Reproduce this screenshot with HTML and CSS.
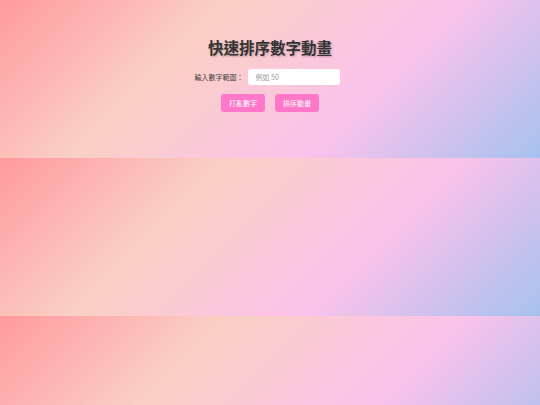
FILE: index.html
```html
<!DOCTYPE html>
<html lang="zh-Hant">
<head>
<meta charset="utf-8">
<title>快速排序數字動畫</title>
<link rel="stylesheet" href="styles.css">
</head>
<body>
<main class="app">
  <h1 class="title">快速排序數字動畫</h1>
  <div class="controls">
    <label class="label" for="range">輸入數字範圍：</label>
    <input class="input" id="range" type="text" placeholder="例如 50">
  </div>
  <div class="actions">
    <button class="btn" type="button">打亂數字</button>
    <button class="btn" type="button">排序動畫</button>
  </div>
</main>
</body>
</html>
```

FILE: styles.css
```css
html {
  margin: 0;
  padding: 0;
}
body {
  margin: 0;
  padding: 36px 0 46px;
  font-family: "Noto Sans CJK TC", "Noto Sans", sans-serif;
  background: linear-gradient(135deg, #ff9a9e 0%, #fad0c4 33%, #fbc2eb 66%, #a6c1ee 100%);
}
.app {
  display: flex;
  flex-direction: column;
  align-items: center;
}
.title {
  margin: 0;
  font-size: 15.5px;
  line-height: 23px;
  font-weight: 700;
  color: #333;
  text-shadow: 1px 1px 2px rgba(0, 0, 0, 0.25);
}
.controls {
  margin-top: 10px;
  display: flex;
  align-items: center;
  justify-content: center;
  height: 16px;
}
.label {
  font-size: 7px;
  color: #444;
  margin-right: 4px;
}
.input {
  box-sizing: border-box;
  width: 92px;
  height: 16px;
  margin-right: 6px;
  border: none;
  border-radius: 3px;
  padding: 0 8px;
  background: #fff;
  font-family: "Noto Sans CJK TC", "Noto Sans", sans-serif;
  font-size: 7px;
  color: #333;
  outline: none;
}
.input::placeholder {
  color: #999;
}
.actions {
  margin-top: 9px;
  display: flex;
  gap: 10px;
}
.btn {
  box-sizing: border-box;
  height: 18px;
  width: 44px;
  padding: 0;
  border: none;
  border-radius: 3px;
  background: #ff77c8;
  color: #fff;
  font-family: "Noto Sans CJK TC", "Noto Sans", sans-serif;
  font-size: 7px;
  cursor: pointer;
}
```
